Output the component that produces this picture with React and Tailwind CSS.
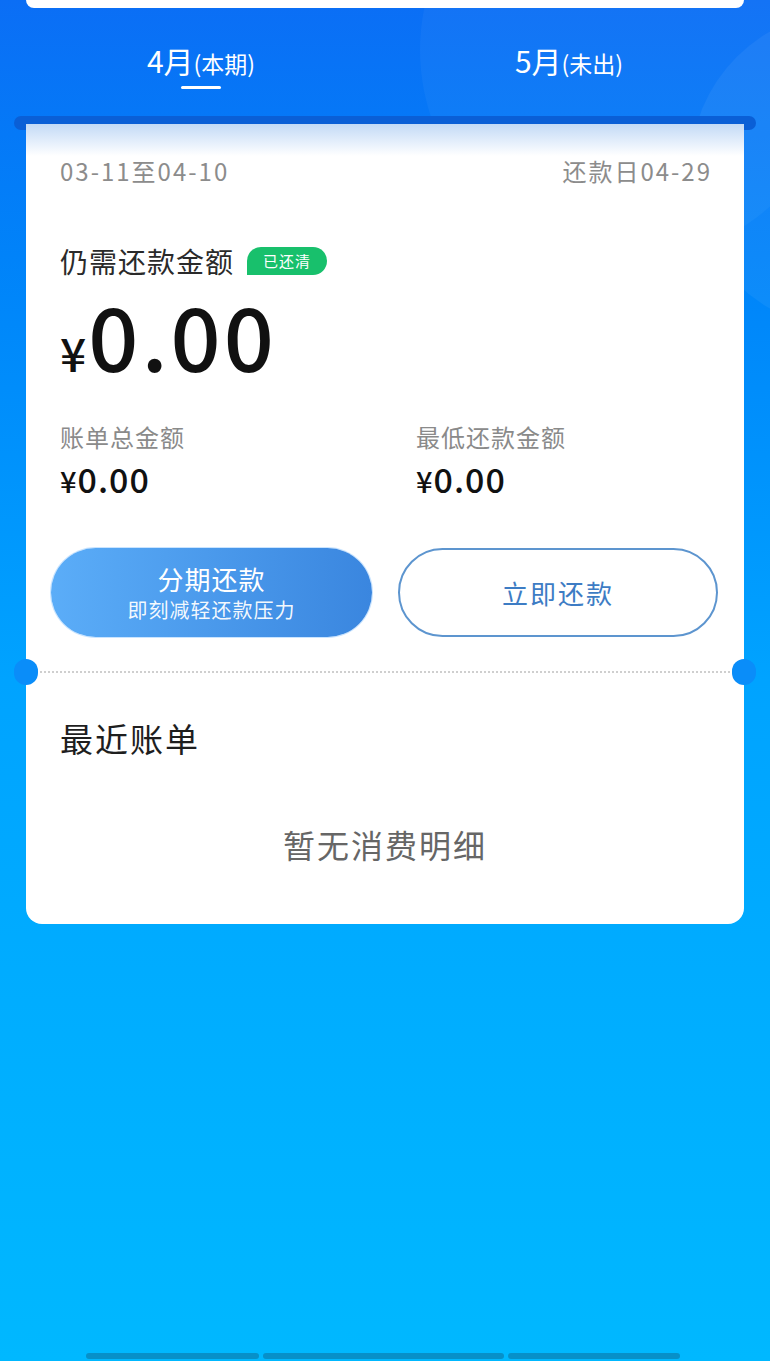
import React from "react";

const font = { fontFamily: '"Noto Sans CJK SC", "Noto Sans", sans-serif' };

function Amount({ label, value }) {
    return (
        <div className="flex flex-col">
            <span className="text-[24px] leading-[30px] tracking-[1px] text-[#8a8a8a]">{label}</span>
            <span className="mt-[8px] text-[34px] leading-[38px] font-medium tracking-[1px] text-[#111]">
                <span className="text-[29px]">¥</span>{value}
            </span>
        </div>
    );
}

export default function App() {
    return (
        <div
            className="relative min-h-[1361px] w-full overflow-hidden bg-gradient-to-b from-[#0b6ef5] via-[#00a3ff] to-[#00b8ff]"
            style={font}
        >
            {/* decorative shapes */}
            <div className="absolute -top-[160px] left-[420px] h-[420px] w-[420px] rounded-full bg-white/[0.04]" />
            <div className="absolute top-[10px] left-[690px] h-[320px] w-[320px] rounded-full bg-white/[0.05]" />

            <div className="relative mx-[26px] h-[8px] rounded-b-[10px] bg-white" />

            <div className="relative flex h-[108px] px-[17px] text-white">
                <div className="flex flex-1 flex-col items-center pt-[33px]">
                    <div className="flex items-baseline">
                        <span className="text-[30px] leading-[38px]">4月</span>
                        <span className="text-[23px]">(本期)</span>
                    </div>
                    <div className="mt-[5px] h-[3px] w-[40px] rounded-full bg-white" />
                </div>
                <div className="flex flex-1 flex-col items-center pt-[33px]">
                    <div className="flex items-baseline">
                        <span className="text-[30px] leading-[38px]">5月</span>
                        <span className="text-[23px]">(未出)</span>
                    </div>
                </div>
            </div>

            <div className="relative mx-[14px] h-[14px] rounded-full bg-[#0a5fd6]" />

            <div className="relative mx-[26px] -mt-[6px] rounded-b-[16px] bg-white">
                <div className="bg-gradient-to-b from-[#c3daf6] via-white to-white px-[34px] pt-[30px]">
                    <div className="flex justify-between text-[24px] leading-[34px] tracking-[2px] text-[#8c8c8c]">
                        <span>03-11至04-10</span>
                        <span className="-mr-[2px]">还款日04-29</span>
                    </div>
                </div>

                <div className="px-[34px]">
                    <div className="mt-[54px] flex items-center">
                        <span className="text-[28px] leading-[38px] tracking-[1px] text-[#2a2a2a]">仍需还款金额</span>
                        <span className="ml-[13px] flex h-[28px] items-center rounded-full rounded-bl-[4px] bg-[#18c06c] px-[16px] text-[15px] tracking-[1px] text-white">
                            已还清
                        </span>
                    </div>

                    <div className="mt-[4px] flex items-baseline text-[#111]">
                        <span className="text-[46px] font-medium">¥</span>
                        <span className="ml-[2px] text-[88px] leading-[100px] font-medium tracking-[3px]">0.00</span>
                    </div>

                    <div className="mt-[35px] grid grid-cols-[356px_1fr]">
                        <Amount label="账单总金额" value="0.00" />
                        <Amount label="最低还款金额" value="0.00" />
                    </div>

                    <div className="mt-[49px] -mx-[9px] flex gap-[26px]">
                        <button className="flex h-[89px] w-[321px] flex-col items-center justify-center rounded-full bg-gradient-to-r from-[#5badf8] to-[#3a86df] text-white shadow-[0_0_0_1px_#c9e4ff]">
                            <span className="text-[26px] leading-[32px] tracking-[1px]">分期还款</span>
                            <span className="mt-[2px] text-[20px] leading-[26px] tracking-[1px] text-white/95">即刻减轻还款压力</span>
                        </button>
                        <button className="flex h-[89px] w-[320px] items-center justify-center rounded-full border-2 border-[#5d95cf] bg-white text-[26px] tracking-[2px] text-[#3d7cc4]">
                            立即还款
                        </button>
                    </div>
                </div>

                <div className="relative mt-[34px] h-[2px]">
                    <div className="mx-[14px] border-t-2 border-dotted border-[#cfcfcf]" />
                    <div className="absolute -left-[12px] -top-[12px] h-[26px] w-[24px] rounded-full bg-[#0a8df9]" />
                    <div className="absolute -right-[12px] -top-[12px] h-[26px] w-[24px] rounded-full bg-[#0a8df9]" />
                </div>

                <div className="px-[34px] pt-[44px] pb-[59px]">
                    <div className="text-[33px] leading-[42px] tracking-[2px] text-[#1e1e1e]">最近账单</div>
                    <div className="mt-[64px] text-center text-[32px] leading-[42px] tracking-[2px] text-[#666]">暂无消费明细</div>
                </div>
            </div>

            <div className="absolute bottom-[2px] left-[86px] flex gap-[4px]">
                <div className="h-[6px] w-[173px] rounded-full bg-[#0790c9]" />
                <div className="h-[6px] w-[241px] rounded-full bg-[#0790c9]" />
                <div className="h-[6px] w-[172px] rounded-full bg-[#0790c9]" />
            </div>
        </div>
    );
}
